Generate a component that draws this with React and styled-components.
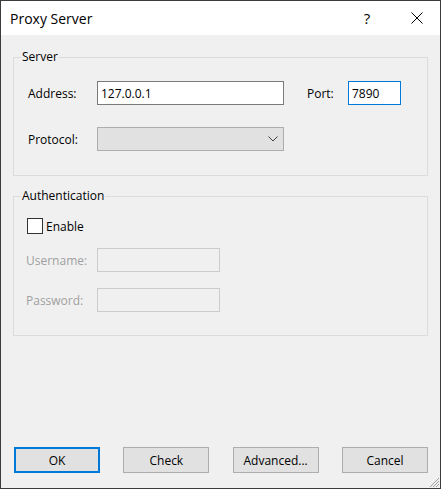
import React from "react";
import styled, { createGlobalStyle } from "styled-components";

const GlobalStyle = createGlobalStyle`
  html, body { margin: 0; padding: 0; background: #1d2733; }
  * { box-sizing: border-box; }
`;

const Window = styled.div`
  position: relative;
  width: 441px;
  height: 489px;
  border: 1px solid #3b3b3b;
  background: #f0f0f0;
  display: flex;
  flex-direction: column;
  font-family: "Segoe UI", "Open Sans", sans-serif;
  font-size: 12px;
  color: #000;
`;

const TitleBar = styled.div`
  height: 34px;
  flex-shrink: 0;
  background: #fff;
  display: flex;
  align-items: center;
`;

const Title = styled.div`
  flex: 1;
  padding-left: 9px;
  font-size: 14px;
`;

const CaptionButton = styled.div`
  width: ${(p) => p.$w || 46}px;
  height: 34px;
  display: flex;
  align-items: center;
  justify-content: center;
  font-size: 15px;
`;

const Body = styled.div`
  flex: 1;
  display: flex;
  flex-direction: column;
  padding: 14px 12px 15px 12px;
`;

const Group = styled.fieldset`
  margin: ${(p) => p.$top || 0}px 0 0 0;
  padding: 0;
  border: 1px solid #dcdcdc;
  min-width: 0;
`;

const Legend = styled.legend`
  margin-left: 7px;
  padding: 0 1px;
  line-height: 16px;
  font-size: 12px;
`;

const Content = styled.div`
  display: flex;
  flex-direction: column;
  padding: ${(p) => p.$pad};
`;

const Row = styled.div`
  display: flex;
  align-items: center;
  height: ${(p) => p.$h || 24}px;
  margin-top: ${(p) => p.$gap || 0}px;
`;

const Label = styled.label`
  width: ${(p) => p.$w}px;
  margin-left: ${(p) => p.$ml || 0}px;
  color: ${(p) => (p.$disabled ? "#a0a0a0" : "#000")};
  flex-shrink: 0;
`;

const Field = styled.input`
  width: ${(p) => p.$w}px;
  height: 24px;
  padding: 0 3px;
  border: 1px solid ${(p) => p.$border || "#7a7a7a"};
  background: ${(p) => p.$bg || "#fff"};
  font-family: "Segoe UI", "Open Sans", sans-serif;
  font-size: 12px;
  color: #000;
  outline: none;
  border-radius: 0;
`;

const Combo = styled.div`
  width: 187px;
  height: 24px;
  border: 1px solid #adadad;
  background: #e1e1e1;
  display: flex;
  align-items: center;
  justify-content: flex-end;
  padding-right: 5px;
`;

const CheckBox = styled.span`
  width: 16px;
  height: 16px;
  margin-left: 1px;
  margin-right: 3px;
  border: 1px solid #333;
  background: #fff;
`;

const ButtonRow = styled.div`
  margin-top: auto;
  padding-left: 1px;
  display: flex;
  justify-content: space-between;
`;

const Button = styled.button`
  width: 86px;
  height: 26px;
  padding: 0;
  background: #e1e1e1;
  border: ${(p) => (p.$default ? "2px solid #0078d7" : "1px solid #adadad")};
  border-radius: 0;
  font-family: "Segoe UI", "Open Sans", sans-serif;
  font-size: 12px;
  color: #000;
`;

const Grip = styled.svg`
  position: absolute;
  right: 0;
  bottom: 0;
`;

export default function App() {
  return (
    <>
      <GlobalStyle />
      <Window>
        <TitleBar>
          <Title>Proxy Server</Title>
          <CaptionButton $w={54}>?</CaptionButton>
          <CaptionButton>
            <svg width="12" height="12" viewBox="0 0 12 12">
              <path d="M0.5 0.5 L11.5 11.5 M11.5 0.5 L0.5 11.5" stroke="#000" strokeWidth="1" fill="none" />
            </svg>
          </CaptionButton>
        </TitleBar>
        <Body>
          <Group>
            <Legend>Server</Legend>
            <Content $pad="16px 0 24px 14px">
              <Row>
                <Label $w={69}>Address:</Label>
                <Field $w={187} defaultValue="127.0.0.1" readOnly />
                <Label $w={41} $ml={23}>Port:</Label>
                <Field $w={53} $border="#0078d7" defaultValue="7890" readOnly />
              </Row>
              <Row $gap={22}>
                <Label $w={69}>Protocol:</Label>
                <Combo>
                  <svg width="10" height="6" viewBox="0 0 10 6">
                    <path d="M0.5 0.5 L5 5 L9.5 0.5" stroke="#404040" strokeWidth="1" fill="none" />
                  </svg>
                </Combo>
              </Row>
            </Content>
          </Group>
          <Group $top={12}>
            <Legend>Authentication</Legend>
            <Content $pad="14px 0 23px 12px">
              <Row $h={16}>
                <CheckBox />
                <span>Enable</span>
              </Row>
              <Row $gap={14}>
                <Label $w={71} $disabled>Username:</Label>
                <Field $w={123} $border="#cccccc" $bg="#f0f0f0" readOnly />
              </Row>
              <Row $gap={16}>
                <Label $w={71} $disabled>Password:</Label>
                <Field $w={123} $border="#cccccc" $bg="#f0f0f0" readOnly />
              </Row>
            </Content>
          </Group>
          <ButtonRow>
            <Button $default>OK</Button>
            <Button>Check</Button>
            <Button>Advanced...</Button>
            <Button>Cancel</Button>
          </ButtonRow>
        </Body>
        <Grip width="12" height="12" viewBox="0 0 12 12">
          <path d="M11 2 L2 11 M11 5 L5 11 M11 8 L8 11" stroke="#a0a0a0" strokeWidth="1" fill="none" />
        </Grip>
      </Window>
    </>
  );
}
